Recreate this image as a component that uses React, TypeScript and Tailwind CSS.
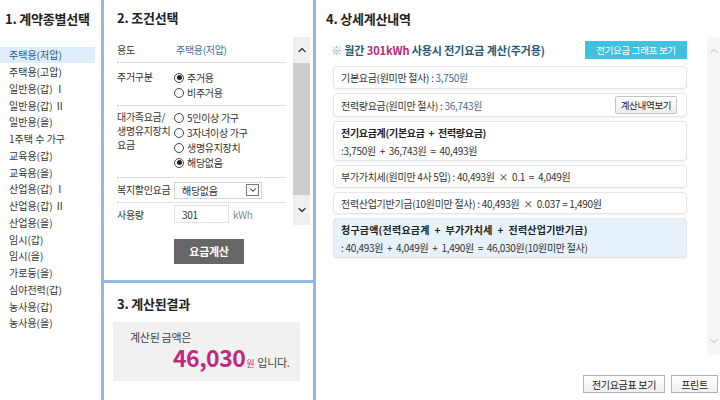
import { ChevronUp, ChevronDown } from 'lucide-react'

const TYPES = [
  '주택용(저압)', '주택용(고압)', '일반용(갑) Ⅰ', '일반용(갑) Ⅱ', '일반용(을)', '1주택 수 가구',
  '교육용(갑)', '교육용(을)', '산업용(갑) Ⅰ', '산업용(갑) Ⅱ', '산업용(을)', '임시(갑)', '임시(을)',
  '가로등(을)', '심야전력(갑)', '농사용(갑)', '농사용(을)',
]

function Radio({ label, checked }: { label: string; checked?: boolean }) {
  return (
    <div className="h-[15px] flex items-center gap-[3px]">
      <span className="w-[10px] h-[10px] rounded-full border border-[#444] bg-white flex items-center justify-center">
        {checked && <span className="w-[5px] h-[5px] rounded-full bg-[#222]" />}
      </span>
      <span>{label}</span>
    </div>
  )
}

function Row({ label, h, children, cls = 'items-center' }: { label: React.ReactNode; h: string; children: React.ReactNode; cls?: string }) {
  return (
    <div className={`flex border-b border-dotted border-[#c8c8c8] ${h} ${cls}`}>
      <div className="w-[57px] shrink-0 leading-[14px]">{label}</div>
      <div className="flex-1">{children}</div>
    </div>
  )
}

function Card({ children, cls = '' }: { children: React.ReactNode; cls?: string }) {
  return (
    <div className={`rounded-[4px] border border-[#e6e6e6] shadow-[0_1px_2px_rgba(0,0,0,0.06)] px-[7px] flex flex-col justify-center whitespace-pre ${cls}`}>
      {children}
    </div>
  )
}

export default function App() {
  return (
    <div className="w-[720px] h-[400px] bg-white flex text-[10px] tracking-[-0.3px] text-[#333] font-['Noto_Sans_CJK_KR','Noto_Sans',sans-serif] overflow-hidden">
      {/* 1. 계약종별선택 */}
      <div className="w-[101px] shrink-0 pt-[10px]">
        <div className="h-[18px] pl-[5px] text-[13px] font-bold text-[#222] leading-[18px] tracking-[-0.2px]">1. 계약종별선택</div>
        <div className="mt-[18.6px] pr-[6px]">
          {TYPES.map((t, i) => (
            <div key={t} className={`h-[16.75px] pl-[9px] flex items-center tracking-[0px] ${i === 0 ? 'bg-[#deedf9] text-[#2a5d8a]' : ''}`}>{t}</div>
          ))}
        </div>
      </div>

      {/* 2 & 3 */}
      <div className="w-[215px] shrink-0 border-x-[3px] border-[#93b8e4] flex flex-col">
        <div className="h-[283px] border-b-[3px] border-[#93b8e4] pt-[9px] pl-[13px] pr-[3px]">
          <div className="h-[18px] text-[13px] font-bold text-[#222] leading-[18px] tracking-[-0.2px]">2. 조건선택</div>
          <div className="mt-[10px] flex">
            <div className="w-[172px]">
              <Row label="용도" h="h-[26px]">
                <span className="pl-[2px] text-[#3c6e9a]">주택용(저압)</span>
              </Row>
              <Row label="주거구분" h="h-[43px]" cls="items-start pt-[7px]">
                <Radio label="주거용" checked />
                <Radio label="비주거용" />
              </Row>
              <Row label={<>대가족요금/<br />생명유지장치<br />요금</>} h="h-[72px]" cls="items-start pt-[4px]">
                <Radio label="5인이상 가구" />
                <Radio label="3자녀이상 가구" />
                <Radio label="생명유지장치" />
                <Radio label="해당없음" checked />
              </Row>
              <Row label="복지할인요금" h="h-[25px]">
                <div className="w-[88px] h-[17px] border border-[#d4d4d4] flex items-center justify-between pl-[7px] pr-[2px]">
                  <span>해당없음</span>
                  <span className="w-[13px] h-[12px] border border-[#777] flex items-center justify-center bg-white">
                    <ChevronDown size={10} strokeWidth={2.5} />
                  </span>
                </div>
              </Row>
              <div className="flex items-center h-[22px]">
                <div className="w-[57px]">사용량</div>
                <div className="w-[55px] h-[18px] border border-[#e2e2e2] pl-[7px] flex items-center">301</div>
                <span className="ml-[4px] text-[#888]">kWh</span>
              </div>
            </div>
            <div className="ml-[8px] w-[17px] h-[188px] bg-[#f0f0f0] flex flex-col">
              <div className="h-[26px] flex items-center justify-center"><ChevronUp size={12} strokeWidth={2.5} className="text-[#333]" /></div>
              <div className="h-[132px] bg-[#cdcdcd]" />
              <div className="flex-1 flex items-center justify-center"><ChevronDown size={12} strokeWidth={2.5} className="text-[#333]" /></div>
            </div>
          </div>
          <div className="mt-[14px] w-[70px] h-[25px] bg-[#666] ml-[57px] flex items-center justify-center text-white font-bold text-[11px]">요금계산</div>
        </div>
        <div className="flex-1 pt-[12px] pl-[9px] pr-[9px]">
          <div className="pl-[4px] h-[18px] text-[13px] font-bold text-[#222] leading-[18px] tracking-[-0.2px]">3. 계산된결과</div>
          <div className="mt-[9px] w-[187px] h-[59px] bg-[#f1f1f1] pl-[17px] pt-[8px]">
            <div className="text-[11px] text-[#444] leading-[14px]">계산된 금액은</div>
            <div className="pl-[43px] flex items-baseline leading-[26px]">
              <span className="text-[23px] font-bold text-[#c0297e] tracking-[-0.5px]">46,030</span>
              <span className="text-[9px] text-[#c0297e] ml-[1px]">원</span>
              <span className="text-[11px] text-[#444] ml-[3px]">입니다.</span>
            </div>
          </div>
        </div>
      </div>

      {/* 4. 상세계산내역 */}
      <div className="flex-1 pt-[10px] flex flex-col">
        <div className="pl-[10px] h-[18px] text-[13px] font-bold text-[#222] leading-[18px] tracking-[-0.2px]">4. 상세계산내역</div>
        <div className="mt-[9px] flex h-[318px]">
          <div className="flex-1 pl-[17px] pr-[20px] pt-[4px]">
            <div className="h-[18px] flex items-center justify-between">
              <div className="-ml-[2px] text-[11px] font-semibold text-[#1f5a78] tracking-[-0.1px]">
                <span className="text-[#7fa8c2]">※</span> 월간 <span className="text-[#b8287a]">301kWh</span> 사용시 전기요금 계산(주거용)
              </div>
              <div className="w-[102px] h-[18px] bg-[#40c1dd] text-white flex items-center justify-center text-[9.5px]">전기요금 그래프 보기</div>
            </div>
            <div className="mt-[7px] flex flex-col gap-[4px]">
              <Card cls="h-[23px]">
                <div>기본요금(원미만 절사) : <span className="text-[#4a6a8c]">3,750원</span></div>
              </Card>
              <Card cls="h-[24px] pr-[9px]">
                <div className="flex items-center justify-between">
                  <div>전력량요금(원미만 절사) : <span className="text-[#4a6a8c]">36,743원</span></div>
                  <div className="w-[62px] h-[18px] border border-[#c4c4c4] rounded-[2px] bg-gradient-to-b from-white to-[#ececec] flex items-center justify-center text-[9.5px] text-[#222]">계산내역보기</div>
                </div>
              </Card>
              <Card cls="h-[40px] gap-[3px]">
                <div className="font-bold text-[#222]">{'전기요금계(기본요금  +  전력량요금)'}</div>
                <div>{':3,750원  +  36,743원  =  40,493원'}</div>
              </Card>
              <Card cls="h-[23px]">
                <div>{'부가가치세(원미만 4사 5입) : 40,493원  ×  0.1  =  4,049원'}</div>
              </Card>
              <Card cls="h-[22px]">
                <div>{'전력산업기반기금(10원미만 절사) : 40,493원  ×  0.037 = 1,490원'}</div>
              </Card>
              <Card cls="h-[40px] gap-[3px] bg-[#e6f1f9] border-[#dbe8f2]">
                <div className="font-bold text-[#222] tracking-[0.2px]">{'청구금액(전력요금계  +  부가가치세  +  전력산업기반기금)'}</div>
                <div>{': 40,493원  +  4,049원  +  1,490원  =  46,030원(10원미만 절사)'}</div>
              </Card>
            </div>
          </div>
          <div className="w-[13px] bg-[#f6f6f6] flex flex-col justify-between py-[8px] items-center">
            <ChevronUp size={12} className="text-[#bbb]" />
            <ChevronDown size={12} className="text-[#bbb]" />
          </div>
        </div>
        <div className="mt-[20px] flex justify-end gap-[6px] pr-[2px]">
          <div className="w-[82px] h-[18px] border border-[#b4b4b4] bg-gradient-to-b from-white to-[#f0f0f0] flex items-center justify-center text-[#222]">전기요금표 보기</div>
          <div className="w-[47px] h-[18px] border border-[#b4b4b4] bg-gradient-to-b from-white to-[#f0f0f0] flex items-center justify-center text-[#222]">프린트</div>
        </div>
      </div>
    </div>
  )
}
